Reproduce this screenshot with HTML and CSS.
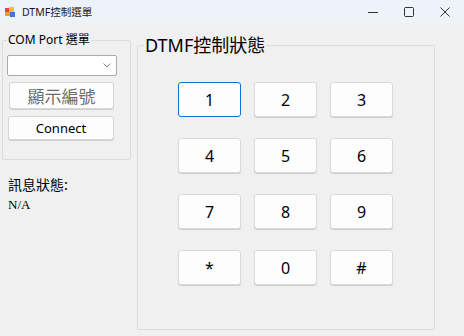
FILE: index.html
```html
<!DOCTYPE html>
<html>
<head>
<meta charset="utf-8">
<link rel="stylesheet" href="styles.css">
</head>
<body>
<div class="window">
  <div class="titlebar">
    <svg class="app-icon" width="10" height="10" viewBox="0 0 10 10">
      <rect x="0" y="1" width="5" height="4" fill="#e8433a"/>
      <rect x="4" y="0" width="5" height="5" fill="#f3c12f"/>
      <rect x="0" y="5" width="5" height="4" fill="#f29a2e"/>
      <rect x="5" y="5" width="5" height="5" fill="#3b7bd6"/>
    </svg>
    <span class="title">DTMF控制選單</span>
    <div class="controls">
      <span class="ctl"><svg width="10" height="10" viewBox="0 0 10 10"><line x1="0" y1="5.5" x2="10" y2="5.5" stroke="#333" stroke-width="1"/></svg></span>
      <span class="ctl"><svg width="10" height="10" viewBox="0 0 10 10"><rect x="0.5" y="0.5" width="9" height="9" rx="1" fill="none" stroke="#333" stroke-width="1"/></svg></span>
      <span class="ctl"><svg width="10" height="10" viewBox="0 0 10 10"><path d="M0.5 0.5 L9.5 9.5 M9.5 0.5 L0.5 9.5" stroke="#333" stroke-width="1"/></svg></span>
    </div>
  </div>
  <div class="main">
    <div class="left">
      <fieldset class="group group-left">
        <legend class="legend-small">COM Port 選單</legend>
        <div class="combo">
          <svg class="chev" width="8" height="5" viewBox="0 0 8 5"><path d="M0.5 0.5 L4 4 L7.5 0.5" fill="none" stroke="#888" stroke-width="1"/></svg>
        </div>
        <button class="btn btn-show">顯示編號</button>
        <button class="btn btn-connect">Connect</button>
      </fieldset>
      <div class="status-label">訊息狀態:</div>
      <div class="status-value">N/A</div>
    </div>
    <fieldset class="group group-right">
      <legend class="legend-big">DTMF控制狀態</legend>
      <div class="keypad">
        <button class="key focused">1</button>
        <button class="key">2</button>
        <button class="key">3</button>
        <button class="key">4</button>
        <button class="key">5</button>
        <button class="key">6</button>
        <button class="key">7</button>
        <button class="key">8</button>
        <button class="key">9</button>
        <button class="key">*</button>
        <button class="key">0</button>
        <button class="key">#</button>
      </div>
    </fieldset>
  </div>
</div>
</body>
</html>
```

FILE: styles.css
```css
html, body {
  margin: 0;
  padding: 0;
}
body {
  width: 464px;
  height: 336px;
  overflow: hidden;
  background: #f0f0f0;
  font-family: "Noto Sans", "Noto Sans CJK TC", sans-serif;
  color: #000;
}
.window {
  width: 464px;
  height: 336px;
  display: flex;
  flex-direction: column;
}
.titlebar {
  height: 23px;
  background: #eef3f9;
  display: flex;
  align-items: center;
  flex-shrink: 0;
}
.app-icon {
  margin-left: 5px;
  margin-top: 1px;
}
.title {
  margin-left: 7px;
  font-size: 10.5px;
  line-height: 14px;
  color: #1a1a1a;
  font-family: "Noto Sans", "Noto Sans CJK TC", sans-serif;
}
.controls {
  margin-left: auto;
  display: flex;
  margin-right: 1px;
}
.ctl {
  width: 36px;
  height: 23px;
  display: flex;
  align-items: center;
  justify-content: center;
}
.main {
  display: flex;
  flex: 1;
  padding-left: 2px;
}
.left {
  width: 129px;
  display: flex;
  flex-direction: column;
}
.group {
  margin: 10px 0 0 0;
  border: 1px solid #dcdcdc;
  border-radius: 2px;
  box-sizing: border-box;
}
.group-left {
  width: 129px;
  height: 127px;
  padding: 0 4px;
}
.legend-small {
  padding: 0 1px;
  font-size: 12px;
  line-height: 14px;
  color: #000;
  font-family: "Noto Sans", "Noto Sans CJK TC", sans-serif;
}
.combo {
  position: relative;
  margin-top: 8px;
  width: 110px;
  height: 21px;
  box-sizing: border-box;
  background: #fff;
  border: 1px solid #aaaaaa;
  border-radius: 2px;
}
.chev {
  position: absolute;
  right: 5px;
  top: 7px;
}
.btn {
  display: block;
  box-sizing: border-box;
  background: #fdfdfd;
  border: 1px solid #d6d6d6;
  border-radius: 3px;
  padding: 0;
  font-family: "Noto Sans", "Noto Sans CJK TC", sans-serif;
  box-shadow: 0 1px 0 #cfcfcf;
}
.btn-show {
  margin: 6px 0 0 2px;
  width: 105px;
  height: 27px;
  font-size: 17px;
  line-height: 25px;
  color: #6d6d6d;
  font-family: "Noto Sans CJK TC", sans-serif;
}
.btn-connect {
  margin: 7px 0 0 1px;
  width: 106px;
  height: 24px;
  font-size: 13px;
  line-height: 22px;
  color: #000;
}
.status-label {
  margin: 15px 0 0 6px;
  font-size: 14px;
  line-height: 18px;
  font-family: "Noto Sans CJK TC", sans-serif;
  font-weight: 400;
  color: #000;
}
.status-value {
  margin: 4px 0 0 6px;
  font-size: 13px;
  line-height: 16px;
  font-family: "Liberation Serif", serif;
  color: #000;
}
.group-right {
  margin-left: 6px;
  width: 298px;
  height: 297px;
  padding: 0 6px;
}
.legend-big {
  padding: 0 1px;
  font-size: 18px;
  line-height: 24px;
  color: #000;
  font-family: "Noto Sans", "Noto Sans CJK TC", sans-serif;
}
.keypad {
  margin: 25px 0 0 34px;
  display: grid;
  grid-template-columns: repeat(3, 63px);
  grid-auto-rows: 35px;
  column-gap: 13px;
  row-gap: 21px;
}
.key {
  box-sizing: border-box;
  background: #fdfdfd;
  border: 1px solid #d9d9d9;
  border-radius: 3px;
  box-shadow: 0 1px 0 #cdcdcd;
  padding: 0;
  font-family: "Noto Sans", sans-serif;
  font-size: 16px;
  color: #000;
}
.key.focused {
  border: 1px solid #0a74d6;
  box-shadow: none;
}
```
